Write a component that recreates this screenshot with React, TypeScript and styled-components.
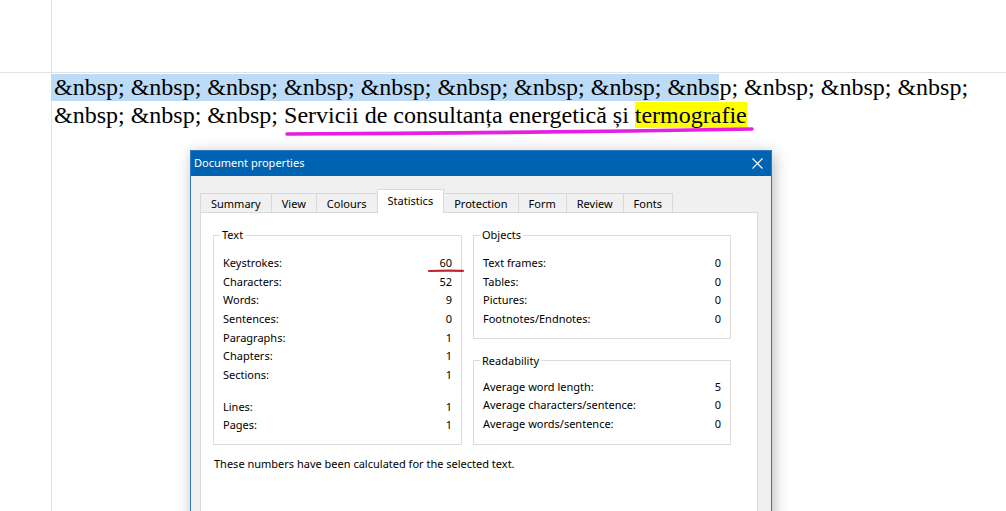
import React from "react";
import styled, { createGlobalStyle } from "styled-components";

const GlobalStyle = createGlobalStyle`
  html, body { margin: 0; padding: 0; background: #ffffff; }
  body { font-family: "Liberation Serif", "Times New Roman", serif; }
`;

const Page = styled.div`
  position: relative;
  width: 1006px;
  height: 511px;
  overflow: hidden;
  display: grid;
  grid-template-columns: 52px 1fr;
  grid-template-rows: 73px 1fr;
  background: #fff;
`;

const MarginCell = styled.div<{ $right?: boolean; $bottom?: boolean }>`
  border-right: ${(p) => (p.$right ? "1px solid #e2e2e2" : "none")};
  border-bottom: ${(p) => (p.$bottom ? "1px solid #e2e2e2" : "none")};
`;

const TextArea = styled.div`
  padding: 0 0 0 2px;
`;

const Paragraph = styled.p`
  margin: 0;
  font-family: "Liberation Serif", "Times New Roman", serif;
  font-size: 24px;
  line-height: 28px;
  color: #000;
  white-space: nowrap;
`;

const Selected = styled.span`
  background: #bcdbf7;
  margin-left: -3px;
  padding: 0 0 1px 3px;
`;

const Marked = styled.span`
  background: #ffff00;
`;

const Overlay = styled.svg`
  position: absolute;
  left: 0;
  top: 0;
  width: 1006px;
  height: 511px;
  pointer-events: none;
  z-index: 5;
`;

const Dialog = styled.div`
  position: absolute;
  left: 190px;
  top: 150px;
  width: 580px;
  height: 420px;
  border: 1px solid #2f78c4;
  background: #f0f0f0;
  box-shadow: 2px 3px 14px rgba(0, 0, 0, 0.28);
  font-family: "Noto Sans", "Open Sans", sans-serif;
  color: #000;
  display: flex;
  flex-direction: column;
`;

const TitleBar = styled.div`
  height: 25px;
  background: #0063b1;
  display: flex;
  align-items: center;
  justify-content: space-between;
  padding: 0 8px 0 3px;
`;

const Title = styled.span`
  color: #fff;
  font-size: 11px;
  line-height: 14px;
  margin-top: -1px;
`;

const CloseIcon = styled.svg`
  width: 11px;
  height: 11px;
`;

const DialogBody = styled.div`
  padding: 13px 11px 0 9px;
  display: flex;
  flex-direction: column;
`;

const TabStrip = styled.div`
  display: flex;
  align-items: flex-end;
  height: 24px;
  margin-bottom: -1px;
  position: relative;
  z-index: 1;
`;

const Tab = styled.div<{ $active?: boolean }>`
  height: ${(p) => (p.$active ? "24px" : "20px")};
  box-sizing: border-box;
  padding: ${(p) => (p.$active ? "0 10px 3px" : "0 10px")};
  margin-left: -1px;
  &:first-child { margin-left: 0; }
  border: 1px solid #d9d9d9;
  border-bottom: ${(p) => (p.$active ? "none" : "1px solid #d9d9d9")};
  background: ${(p) => (p.$active ? "#ffffff" : "#f0f0f0")};
  font-size: 11px;
  display: flex;
  align-items: center;
  color: #000;
  position: relative;
  z-index: ${(p) => (p.$active ? 2 : 1)};
`;

const TabPanel = styled.div`
  width: 558px;
  box-sizing: border-box;
  background: #fff;
  border: 1px solid #d9d9d9;
  padding: 14px 12px 40px 12px;
`;

const Groups = styled.div`
  display: grid;
  grid-template-columns: 249px 258px;
  column-gap: 11px;
`;

const Column = styled.div`
  display: flex;
  flex-direction: column;
  gap: 14px;
`;

const Group = styled.fieldset<{ $grow?: boolean }>`
  margin: 0;
  min-width: 0;
  border: 1px solid #dcdcdc;
  padding: ${(p) => (p.$grow ? "8px 9px 9px 9px" : "10px 9px 10px 9px")};
  flex: ${(p) => (p.$grow ? "1" : "none")};
`;

const Legend = styled.legend`
  font-size: 11px;
  line-height: 16px;
  padding: 0 2px;
  margin-left: -3px;
  color: #000;
`;

const StatRow = styled.div<{ $gapBefore?: boolean }>`
  display: flex;
  justify-content: space-between;
  align-items: center;
  height: 18.7px;
  font-size: 11px;
  margin-top: ${(p) => (p.$gapBefore ? "13px" : "0")};
`;

const StatLabel = styled.span``;
const StatValue = styled.span``;

const Note = styled.div`
  margin-top: 11px;
  font-size: 11px;
  line-height: 16px;
  padding-left: 1px;
`;

type Stat = { label: string; value: string; gap?: boolean };

const textStats: Stat[] = [
  { label: "Keystrokes:", value: "60" },
  { label: "Characters:", value: "52" },
  { label: "Words:", value: "9" },
  { label: "Sentences:", value: "0" },
  { label: "Paragraphs:", value: "1" },
  { label: "Chapters:", value: "1" },
  { label: "Sections:", value: "1" },
  { label: "Lines:", value: "1", gap: true },
  { label: "Pages:", value: "1" },
];

const objectStats: Stat[] = [
  { label: "Text frames:", value: "0" },
  { label: "Tables:", value: "0" },
  { label: "Pictures:", value: "0" },
  { label: "Footnotes/Endnotes:", value: "0" },
];

const readabilityStats: Stat[] = [
  { label: "Average word length:", value: "5" },
  { label: "Average characters/sentence:", value: "0" },
  { label: "Average words/sentence:", value: "0" },
];

const tabs = ["Summary", "View", "Colours", "Statistics", "Protection", "Form", "Review", "Fonts"];

const Rows = ({ items }: { items: Stat[] }) => (
  <>
    {items.map((s) => (
      <StatRow key={s.label} $gapBefore={s.gap}>
        <StatLabel>{s.label}</StatLabel>
        <StatValue>{s.value}</StatValue>
      </StatRow>
    ))}
  </>
);

const nb = "&nbsp;";

export default function App() {
  return (
    <>
      <GlobalStyle />
      <Page>
        <MarginCell $right $bottom />
        <MarginCell $bottom />
        <MarginCell $right />
        <TextArea>
          <Paragraph>
            <Selected>
              {`${nb} ${nb} ${nb} ${nb} ${nb} ${nb} ${nb} ${nb} &nbs`}
            </Selected>
            {`p; ${nb} ${nb} ${nb}`}
            <br />
            {`${nb} ${nb} ${nb} Servicii de consultanța energetică și `}
            <Marked>termografie</Marked>
          </Paragraph>
        </TextArea>

        <Dialog>
          <TitleBar>
            <Title>Document properties</Title>
            <CloseIcon viewBox="0 0 11 11">
              <path d="M0.5 0.5 L10.5 10.5 M10.5 0.5 L0.5 10.5" stroke="#fff" strokeWidth="1.1" fill="none" />
            </CloseIcon>
          </TitleBar>
          <DialogBody>
            <TabStrip>
              {tabs.map((t) => (
                <Tab key={t} $active={t === "Statistics"}>
                  {t}
                </Tab>
              ))}
            </TabStrip>
            <TabPanel>
              <Groups>
                <Group>
                  <Legend>Text</Legend>
                  <Rows items={textStats} />
                </Group>
                <Column>
                  <Group>
                    <Legend>Objects</Legend>
                    <Rows items={objectStats} />
                  </Group>
                  <Group $grow>
                    <Legend>Readability</Legend>
                    <Rows items={readabilityStats} />
                  </Group>
                </Column>
              </Groups>
              <Note>These numbers have been calculated for the selected text.</Note>
            </TabPanel>
          </DialogBody>
        </Dialog>

        <Overlay viewBox="0 0 1006 511">
          <path d="M287 134 Q 520 133 752 129" stroke="#e41fe0" strokeWidth="3.6" fill="none" strokeLinecap="round" />
          <path d="M429 271 Q 446 270.2 463 270.8" stroke="#c4262e" strokeWidth="2.2" fill="none" strokeLinecap="round" />
        </Overlay>
      </Page>
    </>
  );
}
